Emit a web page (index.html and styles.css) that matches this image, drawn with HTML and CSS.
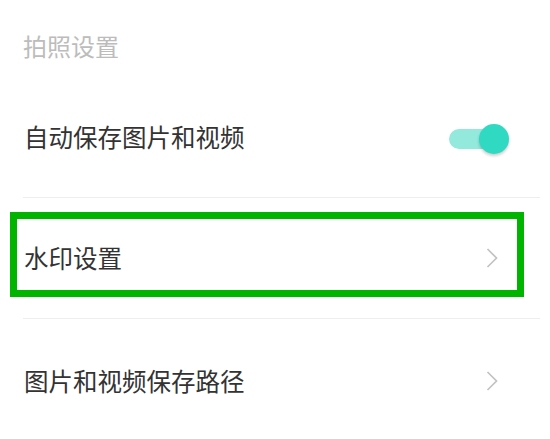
FILE: index.html
```html
<!DOCTYPE html>
<html lang="zh">
<head>
<meta charset="utf-8">
<link rel="stylesheet" href="styles.css">
</head>
<body>
<div class="page">
  <div class="section-title">拍照设置</div>
  <ul class="list">
    <li class="row">
      <span class="label">自动保存图片和视频</span>
      <span class="switch"><span class="track"></span><span class="thumb"></span></span>
    </li>
    <li class="row">
      <span class="label">水印设置</span>
      <svg class="chevron" width="12" height="20" viewBox="0 0 12 20"><path d="M1.5 1 L10.5 10 L1.5 19" fill="none" stroke="#c2c2c2" stroke-width="1.7"/></svg>
    </li>
    <li class="row last">
      <span class="label">图片和视频保存路径</span>
      <svg class="chevron" width="12" height="20" viewBox="0 0 12 20"><path d="M1.5 1 L10.5 10 L1.5 19" fill="none" stroke="#c2c2c2" stroke-width="1.7"/></svg>
    </li>
  </ul>
  <div class="highlight"></div>
</div>
</body>
</html>
```
FILE: styles.css
```css
html, body {
  margin: 0;
  padding: 0;
  background: #fff;
}
.page {
  position: relative;
  width: 550px;
  height: 439px;
  overflow: hidden;
  font-family: "Noto Sans CJK SC", "Noto Sans", sans-serif;
}
.section-title {
  height: 77px;
  box-sizing: border-box;
  padding: 30px 0 0 23px;
  font-size: 24px;
  line-height: 32px;
  color: #bcbcbc;
}
.list {
  list-style: none;
  margin: 0;
  padding: 0 10px 0 24px;
}
.row {
  height: 120px;
  display: flex;
  align-items: center;
  justify-content: space-between;
  border-bottom: 1px solid #eeeeee;
  margin-left: -1px;
}
.row.last {
  border-bottom: none;
  padding-top: 4px;
  height: 116px;
}
.label {
  font-size: 24.5px;
  line-height: 32px;
  color: #333333;
  padding-left: 1px;
}
.chevron {
  margin-right: 42px;
  display: block;
}
.switch {
  position: relative;
  width: 60px;
  height: 28px;
  margin-right: 31px;
  margin-top: 3px;
}
.track {
  position: absolute;
  left: 0;
  top: 4px;
  width: 50px;
  height: 20px;
  border-radius: 10px;
  background: #93e9dc;
}
.thumb {
  position: absolute;
  right: 0;
  top: -1px;
  width: 30px;
  height: 30px;
  border-radius: 50%;
  background: #2fd9c2;
  box-shadow: 0 2px 3px rgba(0,0,0,0.2);
}
.highlight {
  position: absolute;
  left: 10px;
  top: 212px;
  width: 514px;
  height: 85px;
  box-sizing: border-box;
  border: 7px solid #00b400;
}
```
